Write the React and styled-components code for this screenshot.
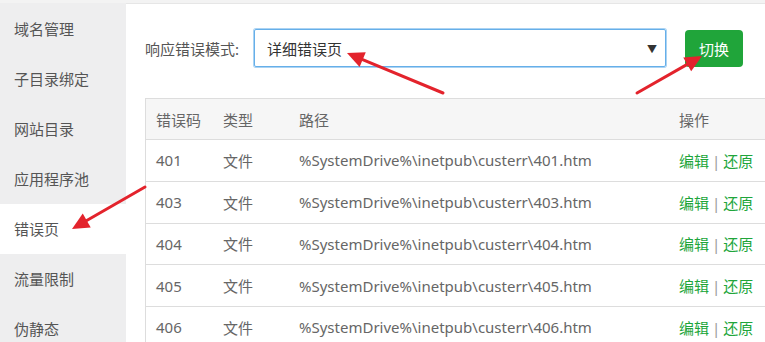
import React from 'react';
import styled, { createGlobalStyle } from 'styled-components';

const GlobalStyle = createGlobalStyle`
  html, body {
    margin: 0;
    padding: 0;
    background: #fff;
    overflow: hidden;
  }
  body {
    font-family: "Noto Sans", "Noto Sans CJK SC", sans-serif;
    font-size: 15px;
    color: #666;
  }
`;

const Page = styled.div`
  position: relative;
  width: 765px;
  height: 342px;
  display: flex;
  border-top: 3px solid #f3f3f3;
  box-sizing: border-box;
  overflow: hidden;
`;

const Sidebar = styled.div`
  width: 126px;
  flex: 0 0 126px;
  background: #eeeeef;
  padding-top: 1px;
`;

const NavItem = styled.div`
  height: 50px;
  line-height: 50px;
  padding-left: 14px;
  font-size: 15px;
  color: #555;
  background: ${(p) => (p.$active ? '#fff' : 'transparent')};
`;

const Main = styled.div`
  flex: 1;
  border-top: 1px solid #e6e6e6;
  padding: 25px 0 0 19px;
  min-width: 0;
`;

const FormRow = styled.div`
  display: flex;
  align-items: center;
  height: 38px;
`;

const Label = styled.span`
  width: 109px;
  color: #555;
  font-size: 15px;
`;

const SelectBox = styled.div`
  width: 412px;
  height: 38px;
  box-sizing: border-box;
  border: 1px solid #66afe9;
  box-shadow: 0 0 0 1px rgba(102, 175, 233, 0.55);
  border-radius: 2px;
  display: flex;
  align-items: center;
  justify-content: space-between;
  padding: 0 8px 0 12px;
  color: #333;
  font-size: 15px;
`;

const Caret = styled.span`
  font-size: 10px;
  color: #333;
`;

const Button = styled.button`
  margin-left: 19px;
  width: 58px;
  height: 37px;
  border: none;
  border-radius: 4px;
  background: #20a53a;
  color: #fff;
  font-family: inherit;
  font-size: 15px;
  padding: 0;
`;

const Table = styled.table`
  margin-top: 31px;
  width: 625px;
  border-collapse: collapse;
  table-layout: fixed;
  border: 1px solid #ddd;
`;

const Th = styled.th`
  height: 40px;
  padding: 0 0 0 10px;
  text-align: left;
  font-weight: normal;
  color: #666;
  background: #f6f6f6;
  border-bottom: 1px solid #ddd;
  width: ${(p) => p.$w || 'auto'};
`;

const Td = styled.td`
  height: 40.75px;
  padding: 0 0 0 10px;
  color: #666;
  border-bottom: 1px solid #ddd;
  white-space: nowrap;
`;

const Link = styled.span`
  color: #20a53a;
`;

const Sep = styled.span`
  color: #999;
  margin: 0 3px;
`;

const Overlay = styled.svg`
  position: absolute;
  left: 0;
  top: 0;
  pointer-events: none;
`;

const navItems = ['域名管理', '子目录绑定', '网站目录', '应用程序池', '错误页', '流量限制', '伪静态'];
const codes = ['401', '403', '404', '405', '406'];

const arrows = [
  { from: [443, 90], to: [347, 50] },
  { from: [637, 90], to: [702, 53] },
  { from: [145, 184], to: [72, 226] },
];

function Arrow({ from, to }) {
  const dx = to[0] - from[0];
  const dy = to[1] - from[1];
  const len = Math.hypot(dx, dy);
  const ux = dx / len;
  const uy = dy / len;
  const head = 17;
  const half = 8;
  const bx = to[0] - ux * head;
  const by = to[1] - uy * head;
  const pts = [
    `${to[0]},${to[1]}`,
    `${bx - uy * half},${by + ux * half}`,
    `${bx + uy * half},${by - ux * half}`,
  ].join(' ');
  return (
    <g>
      <line x1={from[0]} y1={from[1]} x2={bx + ux * 2} y2={by + uy * 2} stroke="#e3232c" strokeWidth="3" strokeLinecap="round" />
      <polygon points={pts} fill="#e3232c" />
    </g>
  );
}

export default function App() {
  return (
    <>
      <GlobalStyle />
      <Page>
        <Sidebar>
          {navItems.map((n) => (
            <NavItem key={n} $active={n === '错误页'}>{n}</NavItem>
          ))}
        </Sidebar>
        <Main>
          <FormRow>
            <Label>响应错误模式:</Label>
            <SelectBox>
              <span>详细错误页</span>
              <Caret>▼</Caret>
            </SelectBox>
            <Button>切换</Button>
          </FormRow>
          <Table>
            <thead>
              <tr>
                <Th $w="57px">错误码</Th>
                <Th $w="66px">类型</Th>
                <Th $w="370px">路径</Th>
                <Th>操作</Th>
              </tr>
            </thead>
            <tbody>
              {codes.map((c) => (
                <tr key={c}>
                  <Td>{c}</Td>
                  <Td>文件</Td>
                  <Td>%SystemDrive%\inetpub\custerr\{c}.htm</Td>
                  <Td>
                    <Link>编辑</Link>
                    <Sep>|</Sep>
                    <Link>还原</Link>
                  </Td>
                </tr>
              ))}
            </tbody>
          </Table>
        </Main>
        <Overlay width="765" height="342">
          {arrows.map((a, i) => (
            <Arrow key={i} {...a} />
          ))}
        </Overlay>
      </Page>
    </>
  );
}
